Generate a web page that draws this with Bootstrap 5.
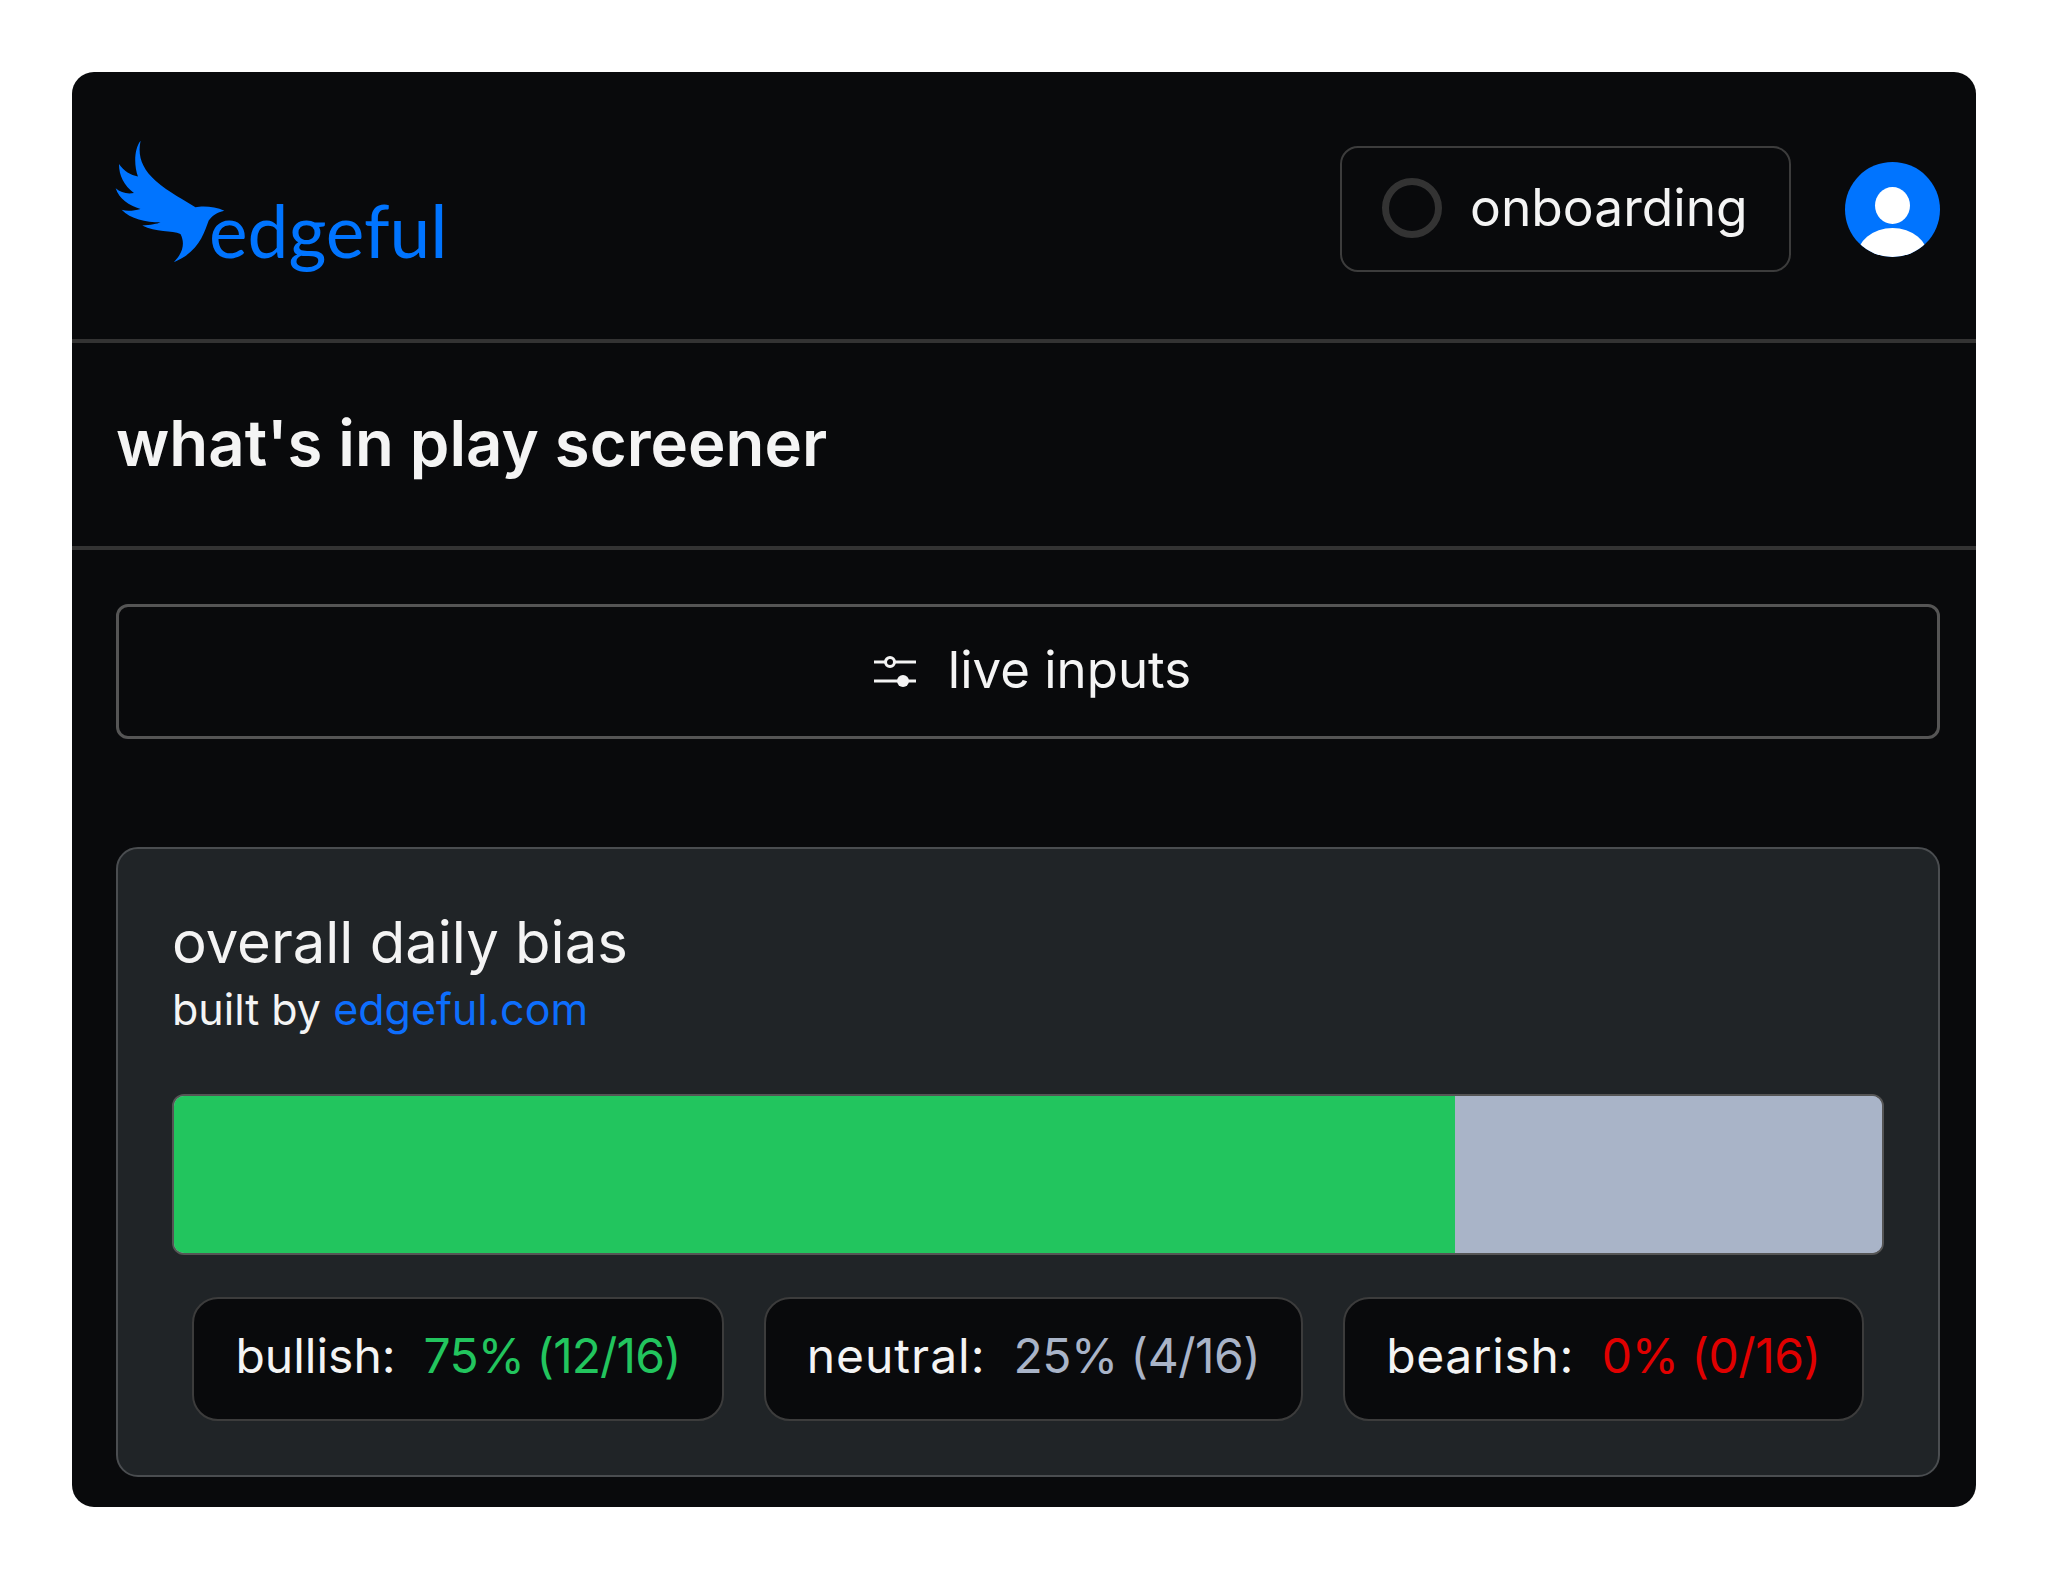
<!DOCTYPE html>
<html lang="en">
<head>
    <meta charset="UTF-8">
    <meta name="viewport" content="width=device-width, initial-scale=1.0">
    <title>what's in play screener</title>
    <link rel="stylesheet" href="https://cdn.jsdelivr.net/npm/bootstrap@5.3.0/dist/css/bootstrap.min.css">
    <style>
        body { background: #fff; font-family: Inter, "Liberation Sans", sans-serif; }
        .shell { margin: 72px; background: #090a0c; border-radius: 22px; color: #f4f4f4; overflow: hidden; }
        .top-row { height: 271px; padding: 7px 36px 0 44px; border-bottom: 4px solid #333; }
        .brand-wrap { margin-top: -13px; margin-left: -2px; }
        .brand-bird { width: 113px; height: 125px; }
        .brand-name { font-family: Lato, sans-serif; font-size: 73px; line-height: 1; color: #0074ff; margin-left: -18px; margin-top: 55px; }
        .status-box { width: 451px; height: 126px; border: 2px solid #3c3c3c; border-radius: 18px; padding-left: 40px; padding-bottom: 2px; gap: 28px; font-size: 51.5px; }
        .status-ring { width: 60px; height: 60px; border: 7px solid #333; border-radius: 50%; }
        .avatar { width: 95px; height: 95px; margin-left: 54px; }
        .title-row { height: 207px; padding-left: 44px; padding-bottom: 2px; border-bottom: 4px solid #333; }
        .title-row h1 { font-size: 63.5px; font-weight: 600; margin: 0; }
        .body-wrap { padding: 54px 36px 30px 44px; }
        .inputs-btn { height: 135px; border: 3px solid #555; border-radius: 12px; color: #f4f4f4; font-size: 51px; gap: 32px; padding-left: 21px; padding-bottom: 8px; }
        .inputs-btn:hover { color: #fff; border-color: #555; }
        .bias-card { margin-top: 108px; height: 630px; background: #202427; border: 2px solid #4a4d50; border-radius: 22px; padding: 54px 54px 0; }
        .bias-title { font-size: 58px; line-height: 78px; font-weight: 400; margin: 0; }
        .bias-sub { font-size: 43px; line-height: 56px; font-weight: 400; margin: 0; }
        .bias-sub a { color: #0d6efd; text-decoration: none; }
        .bias-bar { height: 161px; margin-top: 57px; border: 2px solid #555; border-radius: 12px; background: #a9b4c8; }
        .bar-up { background: #22c55e; }
        .bar-flat { background: #a9b4c8; }
        .pill-row { gap: 40px; margin-top: 42px; }
        .stat-pill { height: 124px; padding: 0 41px 6px; background: #090a0c; border: 2px solid #3c3c3c; border-radius: 26px; font-size: 48px; gap: 28px; white-space: nowrap; }
        .val-up { color: #22c55e; letter-spacing: -0.9px; }
        .val-flat { color: #a9b4c8; letter-spacing: -0.5px; }
        .val-down { color: #e00000; letter-spacing: -0.45px; }
        .wide-label { letter-spacing: 1px; }
        .mid-label { letter-spacing: 0.6px; }
    </style>
</head>
<body>

    <div class="shell">
        <!-- header -->
        <div class="top-row d-flex align-items-center">
            <div class="brand-wrap d-flex align-items-start me-auto">
                <svg class="brand-bird" viewBox="165 240 340 375" fill="#0074ff">
                    <path d="M245 245 C235 290 250 330 290 365 C330 400 380 425 410 445 C430 440 470 442 497 455 C475 460 460 470 450 485 C435 525 420 580 345 610 C375 580 378 550 365 525 C340 515 290 520 250 500 C275 498 295 495 305 490 C260 490 215 480 188 452 C205 458 225 455 245 450 C210 440 180 420 170 388 C185 402 205 405 225 402 C195 380 180 350 180 315 C195 335 215 350 237 352 C225 320 225 270 245 245 Z"/>
                </svg>
                <span class="brand-name">edgeful</span>
            </div>
            <div class="status-box d-flex align-items-center">
                <span class="status-ring"></span>
                <span>onboarding</span>
            </div>
            <svg class="avatar" viewBox="0 0 95 95">
                <defs><clipPath id="avatar-clip"><circle cx="47.5" cy="47.5" r="47.5"/></clipPath></defs>
                <circle cx="47.5" cy="47.5" r="47.5" fill="#0074ff"/>
                <g clip-path="url(#avatar-clip)" fill="#fff">
                    <ellipse cx="47.5" cy="43.5" rx="17.5" ry="18.5"/>
                    <ellipse cx="47.5" cy="96" rx="36" ry="30"/>
                </g>
            </svg>
        </div>

        <!-- page title -->
        <div class="title-row d-flex align-items-center">
            <h1>what's in play screener</h1>
        </div>

        <div class="body-wrap">
            <button class="btn inputs-btn w-100 d-flex align-items-center justify-content-center" type="button">
                <svg width="42" height="34" viewBox="0 0 42 34" fill="none" stroke="#f4f4f4" stroke-width="3">
                    <path d="M0 8 H11 M21 8 H42"/>
                    <circle cx="16" cy="8" r="4.5"/>
                    <path d="M0 27 H42"/>
                    <circle cx="29" cy="27" r="6" fill="#f4f4f4" stroke="none"/>
                </svg>
                <span>live inputs</span>
            </button>

            <div class="bias-card">
                <h2 class="bias-title">overall daily bias</h2>
                <p class="bias-sub">built by <a href="#">edgeful.com</a></p>

                <div class="progress bias-bar">
                    <div class="progress-bar bar-up" style="width: 75%"></div>
                    <div class="progress-bar bar-flat" style="width: 25%"></div>
                </div>

                <div class="pill-row d-flex justify-content-center">
                    <div class="stat-pill d-flex align-items-center"><span>bullish:</span><span class="val-up">75% (12/16)</span></div>
                    <div class="stat-pill d-flex align-items-center"><span class="wide-label">neutral:</span><span class="val-flat">25% (4/16)</span></div>
                    <div class="stat-pill d-flex align-items-center"><span class="mid-label">bearish:</span><span class="val-down">0% (0/16)</span></div>
                </div>
            </div>
        </div>
    </div>

    <script src="https://cdn.jsdelivr.net/npm/bootstrap@5.3.0/dist/js/bootstrap.bundle.min.js"></script>
</body>
</html>
